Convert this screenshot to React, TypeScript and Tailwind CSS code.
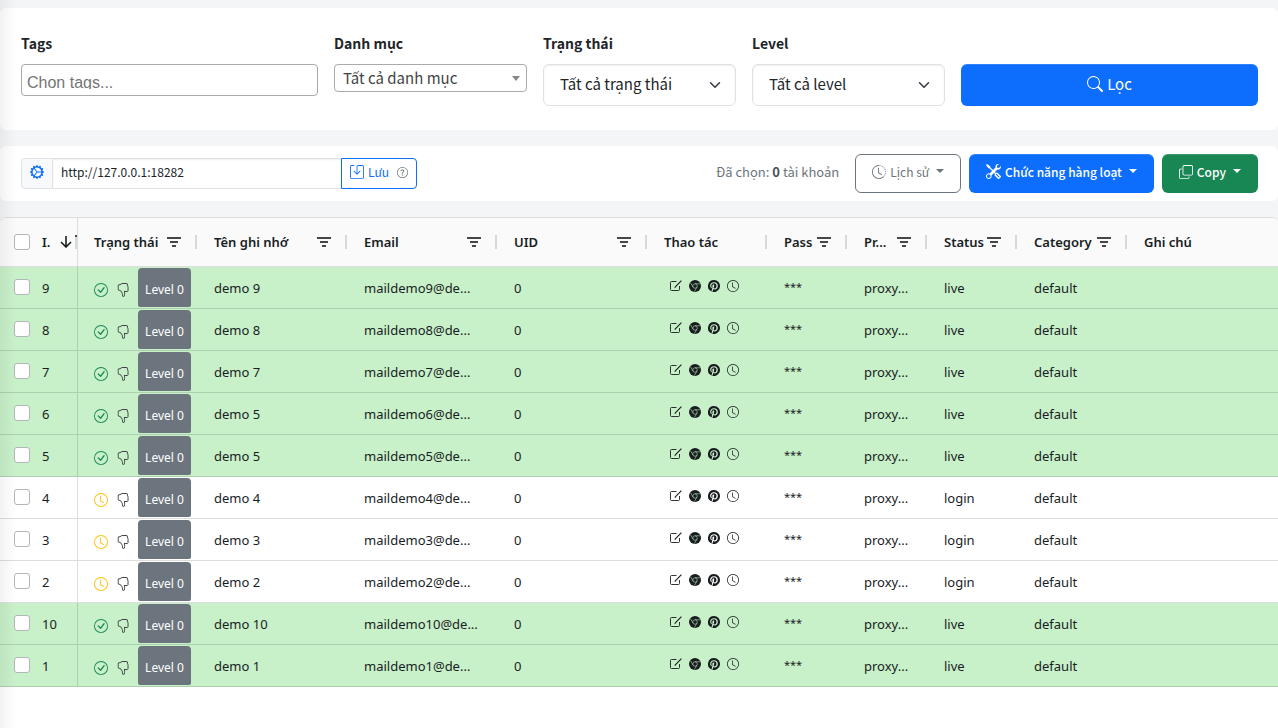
import { useState } from "react";
import type { ReactNode } from "react";
import {
  BsCheckCircle,
  BsClock,
  BsClockHistory,
  BsCopy,
  BsGearWideConnected,
  BsHandThumbsDown,
  BsPinterest,
  BsQuestionCircle,
  BsSave,
  BsSearch,
  BsTools,
} from "react-icons/bs";

type Account = { id: number; name: string; email: string; status: "live" | "login" };

const accounts: Account[] = [
  { id: 9, name: "demo 9", email: "maildemo9@de...", status: "live" },
  { id: 8, name: "demo 8", email: "maildemo8@de...", status: "live" },
  { id: 7, name: "demo 7", email: "maildemo7@de...", status: "live" },
  { id: 6, name: "demo 5", email: "maildemo6@de...", status: "live" },
  { id: 5, name: "demo 5", email: "maildemo5@de...", status: "live" },
  { id: 4, name: "demo 4", email: "maildemo4@de...", status: "login" },
  { id: 3, name: "demo 3", email: "maildemo3@de...", status: "login" },
  { id: 2, name: "demo 2", email: "maildemo2@de...", status: "login" },
  { id: 10, name: "demo 10", email: "maildemo10@de...", status: "live" },
  { id: 1, name: "demo 1", email: "maildemo1@de...", status: "live" },
];

function FilterIcon() {
  return (
    <svg width="14" height="10" viewBox="0 0 14 10" fill="#454648" aria-hidden="true">
      <rect x="0" y="0" width="14" height="2" />
      <rect x="3" y="4" width="8" height="2" />
      <rect x="5" y="8" width="4" height="2" />
    </svg>
  );
}

function EditIcon() {
  return (
    <svg width="12" height="12" viewBox="0 0 12 12" fill="none" stroke="currentColor" aria-hidden="true">
      <path d="M6.5 1.5h-5a1 1 0 0 0-1 1v7a1 1 0 0 0 1 1h7a1 1 0 0 0 1-1V6" strokeWidth="0.9" />
      <path d="M11.4.6 5.6 6.6 4.8 7.6" strokeWidth="1.1" />
    </svg>
  );
}

function ChromeIcon() {
  return (
    <svg width="12" height="12" viewBox="0 0 16 16" fill="none" aria-hidden="true">
      <circle cx="8" cy="8" r="8" fill="currentColor" />
      <g stroke="#b9dfba" strokeWidth="0.8">
        <circle cx="8" cy="8" r="3" />
        <path d="M8 5h7M5.4 9.5 2 3.6M10.6 9.5 7.2 15.4" />
      </g>
    </svg>
  );
}

function Caret() {
  return (
    <svg width="8" height="4" viewBox="0 0 8 4" fill="currentColor" className="mb-[2px] ml-[3px]" aria-hidden="true">
      <path d="M0 0h8L4 4z" />
    </svg>
  );
}

function Chevron() {
  return (
    <svg
      width="12"
      height="12"
      viewBox="0 0 16 16"
      fill="none"
      stroke="#343a40"
      strokeWidth="2"
      strokeLinecap="round"
      strokeLinejoin="round"
      className="pointer-events-none absolute top-[15px] right-[15px]"
      aria-hidden="true"
    >
      <path d="m2 5 6 6 6-6" />
    </svg>
  );
}

function HeadCell({ children, filter = false, last = false }: { children: ReactNode; filter?: boolean; last?: boolean }) {
  return (
    <th scope="col" className="relative h-[49px] border-b border-[#dddddd] py-0 pr-[17px] pl-4 text-left font-semibold">
      <div className="flex items-center justify-between">
        <span className="pt-[2px] whitespace-nowrap">{children}</span>
        {filter && (
          <button type="button" aria-label="Filter" className="shrink-0">
            <FilterIcon />
          </button>
        )}
      </div>
      {!last && <span className="absolute top-[17px] right-px h-[14px] w-[2px] bg-[#d8d9da]" />}
    </th>
  );
}

const box = "block size-4 appearance-none rounded-[3px] border border-[#b4b5b6] bg-white checked:bg-[#0d6efd]";

function Row({ account }: { account: Account }) {
  const live = account.status === "live";
  const edge = live ? "border-[#afcfb1]" : "border-[#dddddd]";
  const frame = "border-b px-4 pb-0 whitespace-nowrap " + edge;
  const cell = frame + " pt-[3px]";
  return (
    <tr className={"h-[42px] " + (live ? "bg-[#c8f0c9]" : "bg-white")}>
      <td className={"border-r border-b p-0 pl-[14px] " + edge}>
        <div className="flex items-center gap-3">
          <input type="checkbox" aria-label={"Chọn " + account.id} className={box + " mb-[2px]"} />
          <span className="pt-[3px]">{account.id}</span>
        </div>
      </td>
      <td className={"border-b p-0 pl-4 " + edge}>
        <div className="flex items-center">
          {live ? (
            <BsCheckCircle size={14} className="mt-[5px] text-[#198754]" />
          ) : (
            <BsClock size={14} className="mt-[5px] text-[#ffc107]" />
          )}
          <BsHandThumbsDown size={14} className="mt-[5px] mr-2 ml-2 text-[#41464b]" />
          <span className="flex h-[39px] w-[53px] items-center justify-center rounded-t-[4px] rounded-b-[2px] bg-[#6c757d] pt-[5px] text-[12px] whitespace-nowrap text-white">
            Level 0
          </span>
        </div>
      </td>
      <td className={cell}>{account.name}</td>
      <td className={cell}>{account.email}</td>
      <td className={cell}>0</td>
      <td className={"border-b p-0 pl-[22px] " + edge}>
        <div className="mb-1 flex items-center gap-[7px]">
          <button type="button" aria-label="Sửa">
            <EditIcon />
          </button>
          <button type="button" aria-label="Mở Chrome">
            <ChromeIcon />
          </button>
          <button type="button" aria-label="Pinterest">
            <BsPinterest size={12} />
          </button>
          <button type="button" aria-label="Lịch sử">
            <BsClock size={12} />
          </button>
        </div>
      </td>
      <td className={frame + " pt-0 text-[11px]"}>***</td>
      <td className={cell}>proxy...</td>
      <td className={cell}>{account.status}</td>
      <td className={cell}>default</td>
      <td className={"border-b p-0 " + edge} />
    </tr>
  );
}

const ui = "font-['Noto_Sans_CJK_JP','Noto_Sans',sans-serif]";
const grid = "font-['Noto_Sans','Open_Sans',sans-serif]";
const label = "mb-[10px] block text-[14px] leading-[22px] font-bold";
const select =
  "block h-[42px] w-full appearance-none rounded-[6px] border border-[#dee2e6] bg-white pr-9 pb-[2px] pl-4 text-[15px] shadow-[inset_0_1px_2px_rgba(0,0,0,0.07)]";
const action = "flex h-[39px] items-center gap-1 rounded-[6px] pb-1 shadow-[inset_0_1px_0_rgba(255,255,255,0.15)]";

export default function App() {
  const [host, setHost] = useState("http://127.0.0.1:18282");
  return (
    <div className={"relative min-h-screen bg-[#f3f5f7] pt-2 text-[#212529] " + ui}>
      <form className="grid grid-cols-[297fr_193fr_193fr_193fr_297fr] gap-4 rounded-[6px] bg-white pt-6 pr-5 pb-6 pl-[21px]">
        <div>
          <label htmlFor="tags" className={label}>Tags</label>
          <div className="h-8 w-full rounded-[4px] border border-[#aaaaaa] px-[5px]">
            <div className="h-6 overflow-hidden">
              <input
                id="tags"
                placeholder="Chọn tags..."
                className="block h-9 w-full font-['Liberation_Sans',sans-serif] text-[16px] outline-none placeholder:text-[#757575]"
              />
            </div>
          </div>
        </div>
        <div>
          <label htmlFor="category" className={label}>Danh mục</label>
          <div className="relative">
            <select id="category" className="block h-7 w-full appearance-none rounded-[4px] border border-[#aaaaaa] bg-white pr-5 pl-2 text-[15px] text-[#444444]">
              <option>Tất cả danh mục</option>
            </select>
            <svg
              width="8"
              height="5"
              viewBox="0 0 8 5"
              fill="#888888"
              className="pointer-events-none absolute top-3 right-[7px]"
              aria-hidden="true"
            >
              <path d="M0 0h8L4 5z" />
            </svg>
          </div>
        </div>
        <div>
          <label htmlFor="state" className={label}>Trạng thái</label>
          <div className="relative">
            <select id="state" className={select}>
              <option>Tất cả trạng thái</option>
            </select>
            <Chevron />
          </div>
        </div>
        <div>
          <label htmlFor="level" className={label}>Level</label>
          <div className="relative">
            <select id="level" className={select}>
              <option>Tất cả level</option>
            </select>
            <Chevron />
          </div>
        </div>
        <button
          type="button"
          className="mt-8 flex h-[42px] items-center justify-center gap-1 rounded-[6px] bg-[#0d6efd] pb-[2px] text-[15px] text-white shadow-[inset_0_1px_0_rgba(255,255,255,0.15)]"
        >
          <BsSearch size={16} />
          Lọc
        </button>
      </form>

      <div className="mt-4 flex items-center justify-between rounded-[6px] bg-white py-2 pr-5 pl-[21px] text-[12px]">
        <div className="flex h-[31px]">
          <label htmlFor="host" className="flex w-8 items-center justify-center rounded-l-[4px] border border-[#dee2e6] bg-[#f8f9fa] pb-[3px] text-[#0d6efd]">
            <BsGearWideConnected size={14} aria-label="Host" />
          </label>
          <input
            id="host"
            value={host}
            onChange={(e) => setHost(e.target.value)}
            className="w-[288px] border-y border-[#dee2e6] px-2 pb-[3px] shadow-[inset_0_1px_2px_rgba(0,0,0,0.07)]"
          />
          <button type="button" className="flex items-center gap-1 rounded-r-[4px] border border-[#0d6efd] px-2 pb-[3px] text-[#0d6efd]">
            <BsSave size={14} />
            Lưu
            <BsQuestionCircle size={11} className="ml-1 text-[#6c757d]" />
          </button>
        </div>
        <div className="flex items-center gap-2">
          <span className="mr-2 pb-1 text-[13px] text-[#6c757d]">
            Đã chọn: <b className="text-[#495057]">0</b> tài khoản
          </span>
          <button type="button" className={action + " border border-[#6c757d] px-4 text-[#6c757d]"}>
            <BsClockHistory size={14} />
            Lịch sử
            <Caret />
          </button>
          <button type="button" className={action + " bg-[#0d6efd] px-[17px] font-medium text-white"}>
            <BsTools size={15} />
            Chức năng hàng loạt
            <Caret />
          </button>
          <button type="button" className={action + " bg-[#198754] px-[17px] font-medium text-white"}>
            <BsCopy size={14} />
            Copy
            <Caret />
          </button>
        </div>
      </div>

      <div className={"mt-4 min-h-[511px] overflow-hidden rounded-t-[6px] border-t border-[#dddddd] bg-white text-[13px] text-[#181d1f] " + grid}>
        <table className="w-full table-fixed border-separate border-spacing-0">
          <colgroup>
            <col className="w-[78px]" />
            <col className="w-[120px]" />
            <col className="w-[150px]" />
            <col className="w-[150px]" />
            <col className="w-[150px]" />
            <col className="w-[120px]" />
            <col className="w-20" />
            <col className="w-20" />
            <col className="w-[90px]" />
            <col className="w-[110px]" />
            <col />
          </colgroup>
          <thead>
            <tr className="bg-[#fafafa]">
              <th scope="col" className="h-[49px] border-r border-b border-[#dddddd] p-0 pl-[14px] text-left font-semibold">
                <div className="flex items-center">
                  <input type="checkbox" aria-label="Chọn tất cả" className={box + " mr-3 shrink-0"} />
                  <span className="w-[18px] shrink-0 pt-[2px]">I.</span>
                  <svg width="12" height="12" viewBox="0 0 12 12" fill="none" stroke="#181d1f" strokeWidth="1.6" className="shrink-0" aria-hidden="true">
                    <path d="M6 0v11M1 6l5 5 5-5" />
                  </svg>
                  <span className="ml-[3px] h-[14px] w-[2px] shrink-0 border-t-2 border-[#454648] bg-[#d8d9da]" />
                </div>
              </th>
              <HeadCell filter>Trạng thái</HeadCell>
              <HeadCell filter>Tên ghi nhớ</HeadCell>
              <HeadCell filter>Email</HeadCell>
              <HeadCell filter>UID</HeadCell>
              <HeadCell>Thao tác</HeadCell>
              <HeadCell filter>Pass</HeadCell>
              <HeadCell filter>Pr...</HeadCell>
              <HeadCell filter>Status</HeadCell>
              <HeadCell filter>Category</HeadCell>
              <HeadCell last>Ghi chú</HeadCell>
            </tr>
          </thead>
          <tbody>
            {accounts.map((a) => (
              <Row key={a.id} account={a} />
            ))}
          </tbody>
        </table>
      </div>
      <div className="pointer-events-none absolute inset-y-0 left-0 w-4 bg-gradient-to-r from-black/5 to-transparent" />
    </div>
  );
}
